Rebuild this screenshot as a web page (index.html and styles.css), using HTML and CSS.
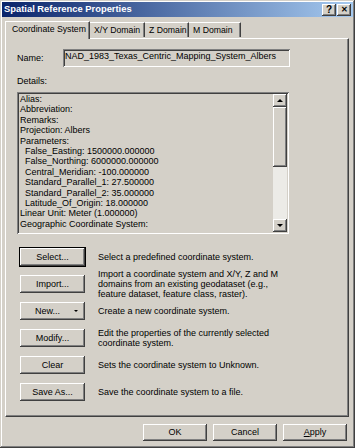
FILE: index.html
```html
<!DOCTYPE html>
<html lang="en">

<head>
    <meta charset="UTF-8">
    <title>Spatial Reference Properties</title>
    <link rel="stylesheet" href="styles.css">
</head>

<body>
    <div class="window">
        <div class="titlebar">
            <span class="title">Spatial Reference Properties</span>
            <span class="tbtn">?</span>
            <span class="tbtn close">&#x2715;</span>
        </div>
        <div class="tabs">
            <div class="tab active">Coordinate System</div>
            <div class="tab t-xy">X/Y Domain</div>
            <div class="tab t-z">Z Domain</div>
            <div class="tab t-m">M Domain</div>
        </div>
        <div class="panel">
            <div class="name-row">
                <span class="name-label">Name:</span>
                <div class="name-box">NAD_1983_Texas_Centric_Mapping_System_Albers</div>
            </div>
            <div class="details-label">Details:</div>
            <div class="listbox">
                <div class="lines">
                    <div>Alias:</div>
                    <div>Abbreviation:</div>
                    <div>Remarks:</div>
                    <div>Projection: Albers</div>
                    <div>Parameters:</div>
                    <div class="ind">False_Easting: 1500000.000000</div>
                    <div class="ind">False_Northing: 6000000.000000</div>
                    <div class="ind">Central_Meridian: -100.000000</div>
                    <div class="ind">Standard_Parallel_1: 27.500000</div>
                    <div class="ind">Standard_Parallel_2: 35.000000</div>
                    <div class="ind">Latitude_Of_Origin: 18.000000</div>
                    <div>Linear Unit: Meter (1.000000)</div>
                    <div>Geographic Coordinate System:</div>
                </div>
                <div class="scrollbar">
                    <div class="sbtn"><span class="arr up"></span></div>
                    <div class="track">
                        <div class="thumb"></div>
                    </div>
                    <div class="sbtn"><span class="arr down"></span></div>
                </div>
            </div>
            <div class="actions">
                <div class="row">
                    <div class="btn default">Select...</div>
                    <div class="desc">Select a predefined coordinate system.</div>
                </div>
                <div class="row">
                    <div class="btn">Import...</div>
                    <div class="desc">Import a coordinate system and X/Y, Z and M<br>domains from an existing geodataset (e.g.,<br>feature dataset, feature class, raster).</div>
                </div>
                <div class="row">
                    <div class="btn split">New...<span class="drop"></span></div>
                    <div class="desc">Create a new coordinate system.</div>
                </div>
                <div class="row">
                    <div class="btn">Modify...</div>
                    <div class="desc">Edit the properties of the currently selected<br>coordinate system.</div>
                </div>
                <div class="row">
                    <div class="btn">Clear</div>
                    <div class="desc">Sets the coordinate system to Unknown.</div>
                </div>
                <div class="row">
                    <div class="btn">Save As...</div>
                    <div class="desc">Save the coordinate system to a file.</div>
                </div>
            </div>
        </div>
        <div class="footer">
            <div class="btn wide">OK</div>
            <div class="btn wide">Cancel</div>
            <div class="btn wide"><u>A</u>pply</div>
        </div>
    </div>
</body>

</html>
```

FILE: styles.css
```css
* {
    margin: 0;
    padding: 0;
    box-sizing: border-box;
}

body {
    background-color: #d4d0c8;
    font: 9px/10.4px "Liberation Sans", Arial, sans-serif;
    color: #000;
}

.window {
    width: 355px;
    height: 448px;
    padding: 2px;
    background-color: #d4d0c8;
    box-shadow: inset -1px -1px #404040, inset 1px 1px #d4d0c8, inset -2px -2px #808080, inset 2px 2px #fff;
}

.titlebar {
    height: 15px;
    display: flex;
    align-items: center;
    padding: 0 2px 0 2px;
    background: linear-gradient(to right, #0a246a, #a6caf0);
    color: #fff;
}

.title {
    flex: 1;
    font-weight: bold;
    font-size: 9.4px;
}

.tbtn {
    width: 14px;
    height: 12px;
    background-color: #d4d0c8;
    color: #000;
    font-weight: bold;
    font-size: 10px;
    line-height: 12px;
    text-align: center;
    box-shadow: inset -1px -1px #404040, inset 1px 1px #fff, inset -2px -2px #808080;
}

.tbtn.close {
    margin-left: 1px;
    font-size: 8px;
}

.tabs {
    display: flex;
    align-items: flex-end;
    height: 18px;
    margin-top: 3px;
    padding-left: 3px;
    position: relative;
    z-index: 1;
    font-size: 8.7px;
}

.tab {
    height: 15px;
    padding-left: 4px;
    line-height: 14px;
    border-top: 1px solid #fff;
    border-left: 1px solid #fff;
    border-right: 1px solid #404040;
    box-shadow: inset -1px 0 #808080;
    white-space: nowrap;
    margin-bottom: 1px;
}

.tab.active {
    width: 85px;
    height: 18px;
    padding-left: 6px;
    line-height: 15px;
    margin-bottom: -1px;
    background-color: #d4d0c8;
}

.t-xy {
    width: 55px;
    border-left: none;
}

.t-z {
    width: 44px;
    border-left: none;
}

.t-m {
    width: 52px;
    border-left: none;
}

.panel {
    margin: 0 4px 0 3px;
    height: 379px;
    padding: 10px 11px 0 11px;
    border-top: 1px solid #fff;
    border-left: 1px solid #fff;
    border-right: 1px solid #404040;
    border-bottom: 1px solid #404040;
    box-shadow: inset -1px -1px #808080;
}

.name-row {
    display: flex;
    align-items: center;
}

.name-label {
    width: 46px;
}

.name-box {
    width: 227px;
    height: 18px;
    line-height: 15px;
    padding-left: 2px;
    box-shadow: inset 1px 1px #808080, inset -1px -1px #fff, inset 2px 2px #404040, inset -2px -2px #d4d0c8;
}

.details-label {
    margin-top: 9px;
    height: 10px;
}

.listbox {
    margin-top: 6px;
    width: 272px;
    height: 142px;
    display: flex;
    padding: 2px;
    box-shadow: inset 1px 1px #808080, inset -1px -1px #fff, inset 2px 2px #404040, inset -2px -2px #d4d0c8;
}

.lines {
    flex: 1;
    padding-left: 1px;
    overflow: hidden;
    white-space: nowrap;
}

.lines .ind {
    padding-left: 5px;
}

.scrollbar {
    width: 14px;
    display: flex;
    flex-direction: column;
}

.sbtn {
    height: 13px;
    background-color: #d4d0c8;
    display: flex;
    align-items: center;
    justify-content: center;
    box-shadow: inset -1px -1px #404040, inset 1px 1px #fff, inset -2px -2px #808080;
}

.arr {
    width: 0;
    height: 0;
    border-left: 3px solid transparent;
    border-right: 3px solid transparent;
}

.arr.up {
    border-bottom: 3px solid #000;
}

.arr.down {
    border-top: 3px solid #000;
}

.track {
    flex: 1;
    background-color: #ecebe7;
}

.thumb {
    height: 60px;
    background-color: #d4d0c8;
    box-shadow: inset -1px -1px #404040, inset 1px 1px #fff, inset -2px -2px #808080;
}

.actions {
    margin-top: 9px;
}

.row {
    height: 27px;
    display: flex;
    align-items: center;
    padding-left: 3px;
}

.btn {
    width: 65px;
    height: 18px;
    line-height: 18px;
    text-align: center;
    background-color: #d4d0c8;
    box-shadow: inset -1px -1px #404040, inset 1px 1px #fff, inset -2px -2px #808080;
    flex-shrink: 0;
}

.btn.default {
    outline: 1px solid #000;
}

.btn.split {
    position: relative;
    padding-right: 10px;
}

.drop {
    position: absolute;
    right: 7px;
    top: 8px;
    width: 0;
    height: 0;
    border-left: 2px solid transparent;
    border-right: 2px solid transparent;
    border-top: 2px solid #000;
}

.desc {
    margin-left: 13px;
    line-height: 10px;
    white-space: nowrap;
}

.footer {
    display: flex;
    justify-content: flex-end;
    gap: 6px;
    margin-top: 7px;
    padding-right: 6px;
}

.btn.wide {
    width: 64px;
    height: 17px;
    line-height: 17px;
}
```
